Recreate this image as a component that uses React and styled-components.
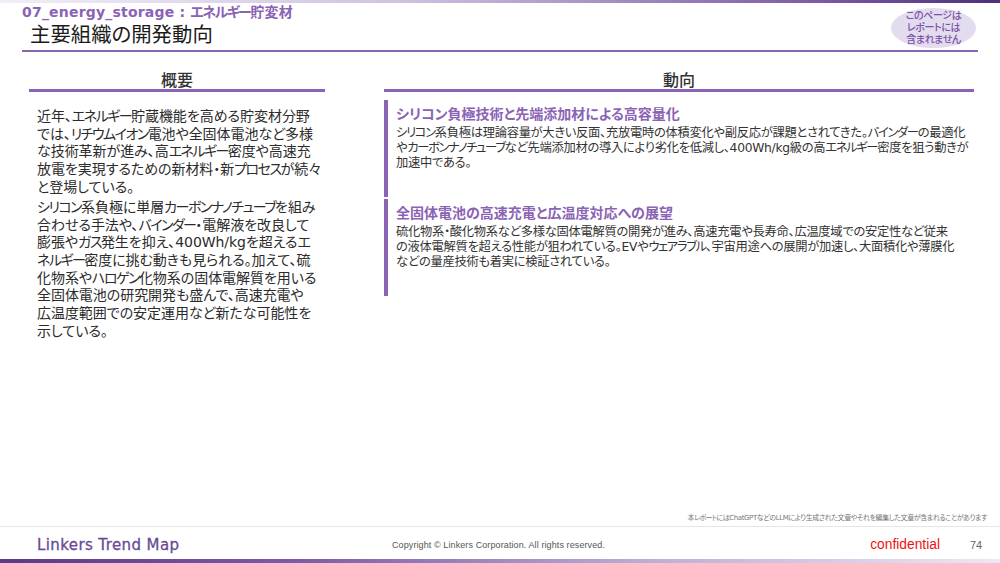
import React from 'react';
import styled, { createGlobalStyle } from 'styled-components';

const Global = createGlobalStyle`
  html, body { margin: 0; padding: 0; background: #fff; }
  body {
    font-family: 'DejaVu Sans', 'Noto Sans CJK JP', sans-serif;
    font-feature-settings: 'palt';
  }
`;

const Slide = styled.div`
  position: relative;
  width: 1000px;
  height: 563px;
  display: flex;
  flex-direction: column;
  overflow: hidden;
  background: #fff;
`;
const TopBar = styled.div`
  height: 3px;
  flex: none;
  background: linear-gradient(90deg, #f1eef6 0%, #cfc3e0 40%, #7f5fa6 80%, #4d2f7c 100%);
`;
const Header = styled.header`
  height: 49px;
  flex: none;
  margin: 0 22px;
  border-bottom: 2px solid #8a63b5;
  box-sizing: border-box;
`;
const Eyebrow = styled.div`
  padding-top: 1px;
  font-size: 14px;
  line-height: 16px;
  font-weight: 700;
  letter-spacing: 0.2px;
  white-space: nowrap;
  color: #8a63b5;
`;
const Title = styled.h1`
  margin: 0;
  padding: 1px 0 0 8px;
  font-size: 20.4px;
  line-height: 29px;
  font-weight: 400;
  color: #1c1c1c;
`;
const Oval = styled.div`
  position: absolute;
  top: 8px;
  right: 24px;
  width: 85px;
  height: 40px;
  border-radius: 50%;
  background: #e2dcee;
  color: #7a52a8;
  font-size: 10px;
  line-height: 12px;
  font-weight: 500;
  letter-spacing: -0.4px;
  text-align: center;
  display: flex;
  align-items: center;
  justify-content: center;
`;
const Main = styled.main`
  flex: 1;
  display: flex;
  padding: 17px 26px 0 29px;
`;
const Left = styled.section`
  width: 296px;
  flex: none;
  margin-right: 59px;
`;
const Right = styled.section`
  flex: 1;
  min-width: 0;
`;
const ColumnHead = styled.h2`
  margin: 0;
  height: 20px;
  font-size: 16px;
  line-height: 24px;
  font-weight: 500;
  text-align: center;
  color: #333;
  border-bottom: 3px solid #8a63b5;
`;
const Overview = styled.div`
  padding: 16px 0 0 8px;
`;
const Para = styled.p`
  margin: 0 0 2.3px;
  font-size: 14px;
  line-height: 17.7px;
  letter-spacing: -0.05px;
  white-space: nowrap;
  color: #2b2b2b;
`;
const Topics = styled.div`
  padding-top: 8px;
  display: flex;
  flex-direction: column;
  gap: 2px;
`;
const Topic = styled.article`
  height: 97px;
  box-sizing: border-box;
  border-left: 4px solid #8a63b5;
  padding: 4px 0 0 8px;
`;
const TopicTitle = styled.h3`
  margin: 0 0 2px;
  font-size: 14px;
  line-height: 20px;
  font-weight: 700;
  color: #8a63b5;
`;
const TopicBody = styled.p`
  margin: 0;
  font-size: 12.3px;
  line-height: 15px;
  letter-spacing: -0.3px;
  white-space: nowrap;
  color: #333;
`;
/* the reference font sets katakana narrower than Noto does */
const Kana = styled.span`
  letter-spacing: -0.11em;
`;
const Disclaimer = styled.div`
  flex: none;
  height: 14px;
  padding-right: 13px;
  text-align: right;
  font-size: 7px;
  line-height: 12px;
  letter-spacing: -0.4px;
  white-space: nowrap;
  color: #777;
`;
const Footer = styled.footer`
  flex: none;
  height: 33px;
  box-sizing: border-box;
  border-top: 1px solid #e6e6e6;
  padding-top: 3px;
  display: grid;
  grid-template-columns: 390px 1fr 90px 60px;
  align-items: center;
`;
const Logo = styled.div`
  padding-left: 37px;
  font-size: 15px;
  font-weight: 400;
  color: #674a94;
  letter-spacing: 0.4px;
  -webkit-text-stroke: 0.3px #674a94;
  white-space: nowrap;
`;
const Copy = styled.div`
  padding-left: 2px;
  font-family: 'Liberation Sans', sans-serif;
  font-size: 9px;
  color: #555;
  letter-spacing: 0.1px;
`;
const Confidential = styled.div`
  font-family: 'Liberation Sans', sans-serif;
  font-size: 13.8px;
  color: #ee1111;
  text-align: right;
`;
const PageNo = styled.div`
  padding-left: 30px;
  font-family: 'Liberation Sans', sans-serif;
  font-size: 11px;
  color: #666;
`;
const BottomBar = styled.div`
  height: 4px;
  flex: none;
  background: linear-gradient(90deg, #5b3a86 0%, #7d5ba6 30%, #bcaed4 65%, #ece8f3 100%);
`;

const overview = [
  ['近年、エネルギー貯蔵機能を高める貯変材分野', 'では、リチウムイオン電池や全固体電池など多様', 'な技術革新が進み、高エネルギー密度や高速充', '放電を実現するための新材料・新プロセスが続々', 'と登場している。'],
  ['シリコン系負極に単層カーボンナノチューブを組み', '合わせる手法や、バインダー・電解液を改良して', '膨張やガス発生を抑え、400Wh/kgを超えるエ', 'ネルギー密度に挑む動きも見られる。加えて、硫', '化物系やハロゲン化物系の固体電解質を用いる', '全固体電池の研究開発も盛んで、高速充電や', '広温度範囲での安定運用など新たな可能性を', '示している。'],
];

const topics = [
  {
    title: 'シリコン負極技術と先端添加材による高容量化',
    lines: ['シリコン系負極は理論容量が大きい反面、充放電時の体積変化や副反応が課題とされてきた。バインダーの最適化', 'やカーボンナノチューブなど先端添加材の導入により劣化を低減し、400Wh/kg級の高エネルギー密度を狙う動きが', '加速中である。'],
  },
  {
    title: '全固体電池の高速充電と広温度対応への展望',
    lines: ['硫化物系・酸化物系など多様な固体電解質の開発が進み、高速充電や長寿命、広温度域での安定性など従来', 'の液体電解質を超える性能が狙われている。EVやウェアラブル、宇宙用途への展開が加速し、大面積化や薄膜化', 'などの量産技術も着実に検証されている。'],
  },
];

const tighten = (text) => text.split(/([ァ-ヶー]+)/).map((part, i) => (
  i % 2 ? <Kana key={i}>{part}</Kana> : part
));

const withBreaks = (lines) => lines.map((l, i) => (
  <React.Fragment key={i}>{tighten(l)}{i < lines.length - 1 && <br />}</React.Fragment>
));

export default function App() {
  return (
    <Slide>
      <Global />
      <TopBar />
      <Header>
        <Eyebrow>{tighten('07_energy_storage : エネルギー貯変材')}</Eyebrow>
        <Title>主要組織の開発動向</Title>
      </Header>
      <Oval><span>このページは<br />レポートには<br />含まれません</span></Oval>
      <Main>
        <Left>
          <ColumnHead>概要</ColumnHead>
          <Overview>
            {overview.map((p, i) => <Para key={i}>{withBreaks(p)}</Para>)}
          </Overview>
        </Left>
        <Right>
          <ColumnHead>動向</ColumnHead>
          <Topics>
            {topics.map((t) => (
              <Topic key={t.title}>
                <TopicTitle>{t.title}</TopicTitle>
                <TopicBody>{withBreaks(t.lines)}</TopicBody>
              </Topic>
            ))}
          </Topics>
        </Right>
      </Main>
      <Disclaimer>{tighten('本レポートにはChatGPTなどのLLMにより生成された文章やそれを編集した文章が含まれることがあります')}</Disclaimer>
      <Footer>
        <Logo>Linkers Trend Map</Logo>
        <Copy>Copyright © Linkers Corporation. All rights reserved.</Copy>
        <Confidential>confidential</Confidential>
        <PageNo>74</PageNo>
      </Footer>
      <BottomBar />
    </Slide>
  );
}
